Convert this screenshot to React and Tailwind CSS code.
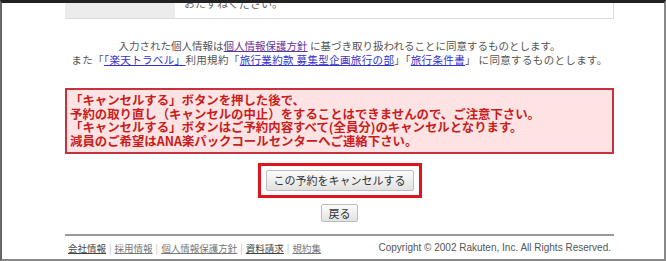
import React from "react";

const jp = { fontFamily: '"Noto Sans CJK JP", "Noto Sans", sans-serif' };

const FooterLink = ({ children, strong }) => (
  <a href="#" className={`underline ${strong ? "text-[#444]" : "text-[#777]"}`}>
    {children}
  </a>
);

const App = () => {
  const links = ["会社情報", "採用情報", "個人情報保護方針", "資料請求", "規約集"];

  return (
    <div
      className="w-[666px] h-[261px] overflow-hidden bg-white border-t-[3px] border-t-[#222] border-l-2 border-l-[#666] border-r-2 border-r-[#888] border-b-2 border-b-[#888]"
      style={jp}
    >
      <div className="ml-[63px] w-[549px] flex flex-col">
        {/* cut off table at the top */}
        <div className="flex h-[16px] border-b border-[#dcdcdc]">
          <div className="w-[110px] bg-[#ececec]"></div>
          <div className="flex-1 border-r border-[#dcdcdc] overflow-hidden">
            <div className="-mt-[8px] pl-[9px] text-[11px] leading-[16px] text-[#666]">
              おたずねください。
            </div>
          </div>
        </div>

        <div className="mt-[20px] text-center text-[10.5px] leading-[14px] text-[#555]">
          <p>
            入力された個人情報は
            <a href="#" className="underline text-[#663399]">個人情報保護方針</a> に基づき取り扱われることに同意するものとします。
          </p>
          <p className="tracking-[0.35px]">
            また「
            <a href="#" className="underline text-[#3333cc]">「楽天トラベル」</a>
            利用規約「
            <a href="#" className="underline text-[#3333cc]">旅行業約款 募集型企画旅行の部</a>
            」「
            <a href="#" className="underline text-[#3333cc]">旅行条件書</a>
            」 に同意するものとします。
          </p>
        </div>

        <div className="mt-[21px] h-[66px] border-2 border-[#c8323c] bg-[#fde3e3] px-[3px] py-[4px] text-[12.4px] leading-[13.5px] font-bold text-[#c81e1e]">
          <p>「キャンセルする」ボタンを押した後で、</p>
          <p>予約の取り直し（キャンセルの中止）をすることはできませんので、ご注意下さい。</p>
          <p>「キャンセルする」ボタンはご予約内容すべて(全員分)のキャンセルとなります。</p>
          <p>減員のご希望はANA楽パックコールセンターへご連絡下さい。</p>
        </div>

        <div className="mt-[9px] flex justify-center">
          <div className="h-[35px] w-[164px] border-[3px] border-[#e0141e] flex items-center justify-center">
            <button className="w-[148px] h-[21px] border border-[#bdbdbd] rounded-[2px] bg-gradient-to-b from-[#fbfbfb] to-[#e2e2e2] text-[11px] text-[#333] leading-none">
              この予約をキャンセルする
            </button>
          </div>
        </div>

        <div className="mt-[6px] flex justify-center">
          <button className="w-[37px] h-[18px] border border-[#bdbdbd] rounded-[2px] bg-gradient-to-b from-[#fbfbfb] to-[#e2e2e2] text-[11px] text-[#333] leading-none">
            戻る
          </button>
        </div>

        <div className="mt-[12px] h-[2px] bg-[#9a9a9a]"></div>

        <div className="mt-[5px] flex items-center justify-between px-[3px] h-[14px]">
          <div className="flex items-center text-[9.5px] leading-[14px]">
            {links.map((l, i) => (
              <React.Fragment key={l}>
                {i > 0 && <span className="mx-[3px] text-[#bbb]">|</span>}
                <FooterLink strong={i === 0 || i === 3}>{l}</FooterLink>
              </React.Fragment>
            ))}
          </div>
          <div
            className="text-[10px] leading-[14px] text-[#555]"
            style={{ fontFamily: '"Liberation Sans", Arial, sans-serif' }}
          >
            Copyright © 2002 Rakuten, Inc. All Rights Reserved.
          </div>
        </div>
      </div>
    </div>
  );
};

export default App;
